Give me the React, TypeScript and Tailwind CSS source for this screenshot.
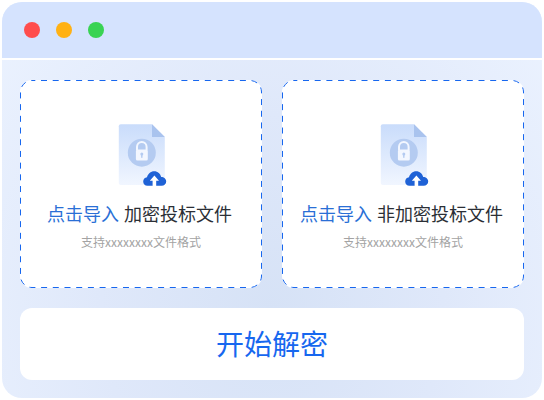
const FileIcon = () => (
  <svg width="52" height="64" viewBox="0 0 52 64" fill="none">
    <defs>
      <linearGradient id="fileBg" x1="0" y1="0" x2="0" y2="1">
        <stop offset="0" stopColor="#c9dcfb" />
        <stop offset="1" stopColor="#f1f6ff" />
      </linearGradient>
    </defs>
    <path d="M1.8 2.3C1.8 1.2 2.7 .3 3.8 .3H35L47.8 13V59C47.8 60.1 46.9 61 45.8 61H3.8C2.7 61 1.8 60.1 1.8 59Z" fill="url(#fileBg)" />
    <path d="M35 .3L47.8 13H35Z" fill="#a9c3ee" />
    <circle cx="24.8" cy="28.7" r="14" fill="#b4cbf1" />
    <path d="M20 26V23C20 20.2 22.1 18 24.8 18C27.5 18 29.6 20.2 29.6 23V26" stroke="#f3f7ff" strokeWidth="2" />
    <rect x="18.9" y="25.5" width="11.9" height="11" rx="1.5" fill="#f3f7ff" />
    <circle cx="24.8" cy="30" r="1.5" fill="#b4cbf1" />
    <rect x="24.1" y="30.4" width="1.4" height="3.4" fill="#b4cbf1" />
    <path d="M30.5 61.8C27.8 61.8 26.2 60 26.2 57.6C26.2 55.3 27.8 53.5 30 53.3C30.8 49.8 33.7 47.2 37.2 47.2C40.7 47.2 43.5 49.6 44.2 53.1C47 53.1 49.2 55 49.2 57.5C49.2 60 47.2 61.8 44.6 61.8Z" fill="#1f62d6" />
    <path d="M37.4 51.6L42 56.8H39.2V62.5H35.6V56.8H32.8Z" fill="#ffffff" />
  </svg>
);

const UploadCard = ({ label }: { label: string }) => (
  <div className="relative flex h-[208px] w-[242px] flex-col items-center rounded-xl bg-white pt-[44px]">
    <svg className="absolute inset-0 h-full w-full" fill="none">
      <rect x=".5" y=".5" width="241" height="207" rx="11.5" stroke="#1767ef" strokeDasharray="6 5.7" strokeDashoffset="2.7" />
    </svg>
    <div className="ml-[3px] h-[64px]">
      <FileIcon />
    </div>
    <p className="mt-[12px] flex gap-[5px] pr-[3px] text-[18px] leading-[26px] text-[#2b2f36]">
      <span className="text-[#2a6fd6]">点击导入</span>
      <span>{label}</span>
    </p>
    <p className="mt-[7px] text-[12px] leading-[18px] text-[#a3a3a3]">支持xxxxxxxx文件格式</p>
  </div>
);

export default function App() {
  return (
    <div className="h-[400px] w-[544px] bg-white p-[2px] font-['Noto_Sans_CJK_SC','Noto_Sans',sans-serif]">
      <div className="h-[396px] w-[540px] overflow-hidden rounded-[20px] bg-[radial-gradient(ellipse_at_50%_78%,#d6e2f6_0%,#dfe8fa_45%,#ecf3ff_100%)]">
        <div className="flex h-[56px] items-center gap-4 bg-[#d5e3fe] pl-[22px]">
          <span className="h-4 w-4 rounded-full bg-[#ff4d4d]" />
          <span className="h-4 w-4 rounded-full bg-[#ffb114]" />
          <span className="h-4 w-4 rounded-full bg-[#39d353]" />
        </div>
        <div className="h-[2px] bg-white" />
        <div className="flex flex-col gap-5 px-[18px] pt-5">
          <div className="flex justify-between">
            <UploadCard label="加密投标文件" />
            <UploadCard label="非加密投标文件" />
          </div>
          <button className="h-[72px] w-[504px] rounded-xl bg-white pb-[2px] text-[28px] text-[#1767ef]">开始解密</button>
        </div>
      </div>
    </div>
  );
}
